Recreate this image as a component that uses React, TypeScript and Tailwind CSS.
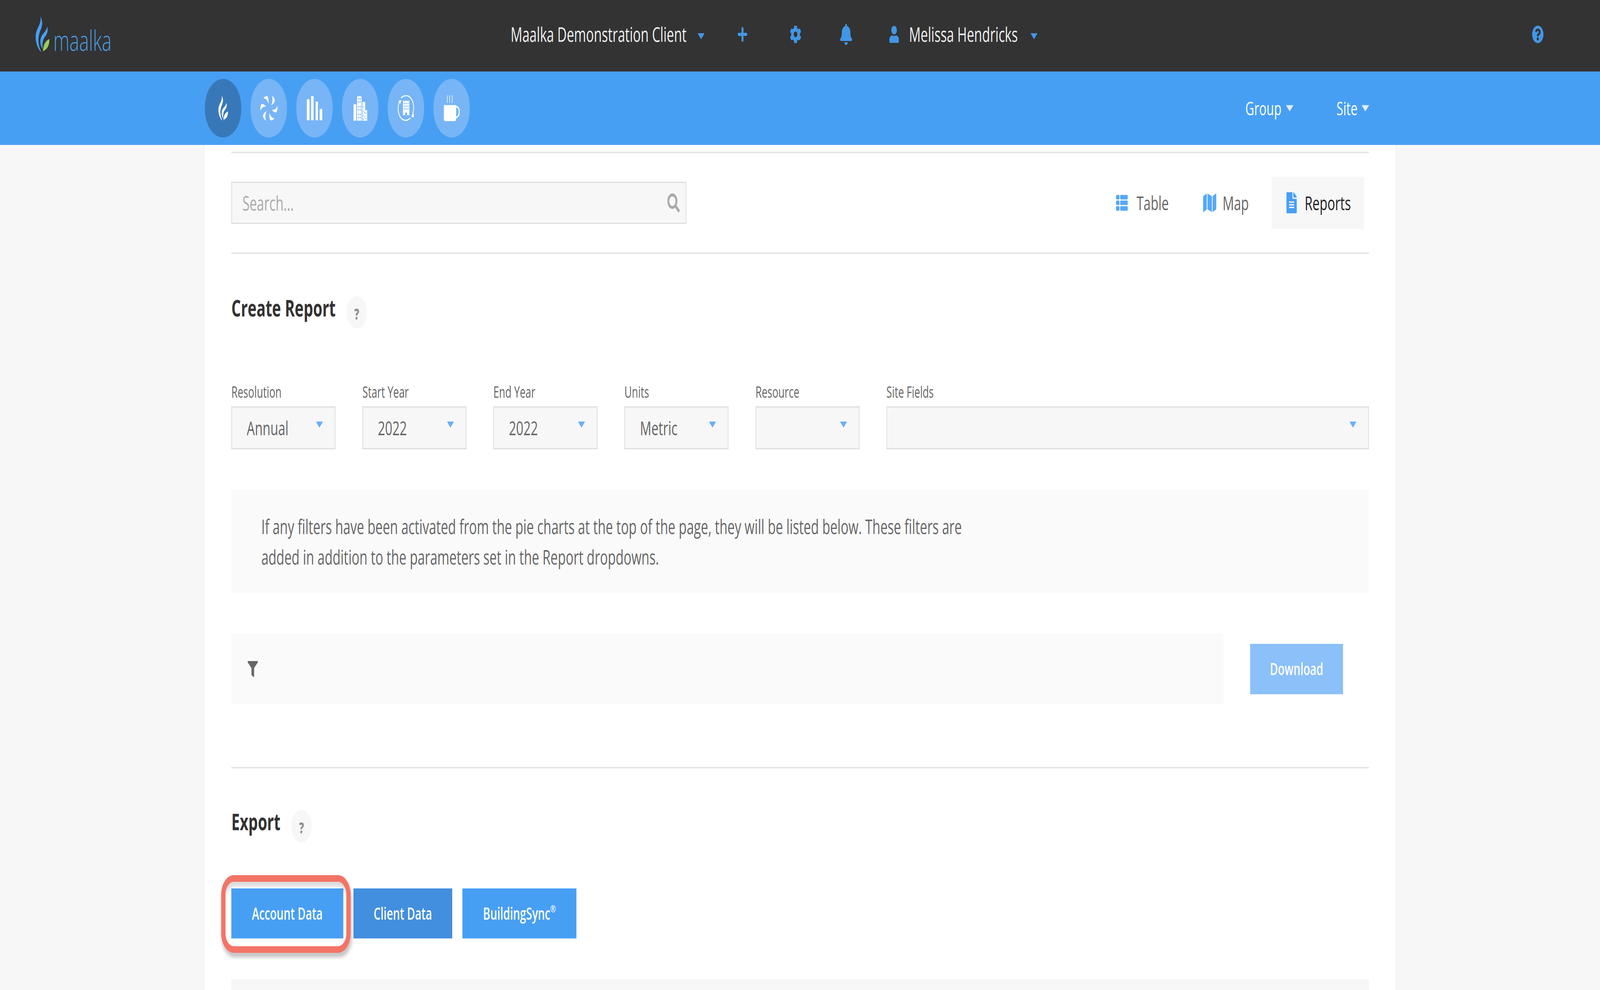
import type { ReactNode } from "react";
import { FaBell, FaCog, FaFileAlt, FaFilter, FaMap, FaPlus, FaQuestionCircle, FaSearch, FaThList, FaUser } from "react-icons/fa";

function Caret({ className }: { className: string }) {
  return (
    <svg viewBox="0 0 26 15" className={className}>
      <path d="M1 0h24c1 0 1 1 .5 1.6L14 14.4c-.6.8-1.4.8-2 0L.5 1.6C0 1 0 0 1 0z" fill="currentColor" />
    </svg>
  );
}

function Flame({ main, leaf, className }: { main: string; leaf: string; className: string }) {
  return (
    <svg viewBox="0 0 38 64" className={className}>
      <path fill={main} d="M14 0C19 8 19 14 16 20C13 26 9 30 8 40C7 50 12 58 16 64C8 60 0 48 0 36C0 25 10 18 13 9C14 6 14 3 14 0Z" />
      <path fill={main} d="M32 18C35 26 31 32 26 36C20 41 18 48 19 58C13 52 11 44 15 37C19 30 28 28 32 18Z" />
      <path fill={leaf} d="M38 40C38 50 34 58 20 62C21 52 25 44 38 40Z" />
    </svg>
  );
}

function FanIcon() {
  return (
    <svg viewBox="-35 -33 70 66" className="w-[70px] h-[66px]">
      {[0, 60, 120, 180, 240, 300].map((deg) => (
        <path key={deg} transform={`rotate(${deg})`} fill="#fff" d="M-22 -26C-15 -31 -8 -32 -5 -30C-1 -24 -1 -17 -2 -11C-5 -20 -12 -25 -22 -26Z" />
      ))}
    </svg>
  );
}

function BarsIcon() {
  return (
    <svg viewBox="0 0 61 62" className="w-[61px] h-[62px]" fill="#fff">
      <rect x="0" y="8" width="11" height="54" />
      <rect x="17" y="0" width="10" height="62" />
      <rect x="35" y="14" width="9" height="48" />
      <rect x="51" y="33" width="10" height="29" />
    </svg>
  );
}

function CityIcon() {
  const rows = [6, 14, 26, 34, 46, 54];
  return (
    <svg viewBox="0 0 54 64" className="w-[54px] h-[64px]">
      <path fill="#fff" d="M0 23l6-2 5 2v41H0z" />
      <path fill="#fff" d="M14 3l5-2h8l5 2v61H14z" />
      <path fill="#fff" d="M35 16h11v21h8v27H35z" />
      {rows.map((y) => (
        <g key={y} fill="#78b5f6">
          <rect x="18" y={y} width="3.5" height="4" />
          <rect x="25" y={y} width="3.5" height="4" />
        </g>
      ))}
      <g fill="#78b5f6">
        <rect x="38" y="27" width="3" height="3" />
        <rect x="38" y="38" width="3" height="3" />
        <rect x="42" y="42" width="3" height="3" />
        <rect x="48" y="43" width="3" height="3" />
        <rect x="38" y="49" width="3" height="3" />
        <rect x="44" y="52" width="3" height="3" />
        <rect x="38" y="58" width="3" height="3" />
        <rect x="48" y="57" width="3" height="3" />
      </g>
    </svg>
  );
}

function RecycleBuildingIcon() {
  return (
    <svg viewBox="0 0 66 66" className="w-[66px] h-[66px]">
      <path fill="none" stroke="#fff" strokeWidth="3" d="M13 7C27 -3 46 -1 56 12C65 23 65 36 59 47" />
      <path fill="none" stroke="#fff" strokeWidth="3" d="M50 58C37 67 19 66 9 54C0 43 -0 28 7 17" />
      <path fill="#fff" d="M53 56l9-13 2 13z" />
      <path fill="#fff" d="M3 14l11-2-3 10z" />
      <path fill="#fff" d="M21 14h25v37H37v-7h-7v7h-9z" />
      <g fill="#78b5f6">
        {[19, 26, 33].map((y) => (
          <g key={y}>
            <rect x="25" y={y} width="3.5" height="3.5" />
            <rect x="32" y={y} width="3.5" height="3.5" />
            <rect x="39" y={y} width="3.5" height="3.5" />
          </g>
        ))}
      </g>
    </svg>
  );
}

function CupIcon() {
  return (
    <svg viewBox="0 0 64 66" className="w-[64px] h-[66px]">
      <g fill="none" stroke="#fff" strokeOpacity="0.85" strokeWidth="2.4">
        <path d="M17 0C11 6 18 11 13 19" />
        <path d="M26 0C20 6 27 11 23 19" />
        <path d="M36 0C30 6 37 11 33 19" />
      </g>
      <path fill="#fff" d="M1 25h48v36c0 3-2 5-5 5H7c-3 0-6-2-6-5z" />
      <path fill="none" stroke="#fff" strokeWidth="4" d="M48 29c8-1 14 5 14 13s-6 14-14 15" />
    </svg>
  );
}

const navIcons = [
  { icon: <Flame main="#fff" leaf="#fff" className="w-[38px] h-[64px]" />, active: true },
  { icon: <FanIcon />, active: false },
  { icon: <BarsIcon />, active: false },
  { icon: <CityIcon />, active: false },
  { icon: <RecycleBuildingIcon />, active: false },
  { icon: <CupIcon />, active: false },
];

function HelpDot() {
  return (
    <div className="w-[80px] h-[83px] rounded-full bg-[#f7f7f7] flex items-center justify-center text-[38px] font-extrabold text-[#909090] leading-none pt-[6px]">
      ?
    </div>
  );
}

function Select({ label, value, width }: { label: string; value?: string; width: string }) {
  return (
    <div className={width}>
      <div className="text-[40px] leading-[50px] text-[#666] mb-[12px]">{label}</div>
      <div className="h-[110px] bg-[#f7f7f7] border-[3px] border-[#dedede] flex items-center justify-between pl-[58px] pr-[47px] text-[50px] text-[#666]">
        <span>{value}</span>
        <Caret className="w-[26px] h-[15px] text-[#67aff9] mb-[18px] ml-auto" />
      </div>
    </div>
  );
}

function ActionButton({ children, className }: { children: ReactNode; className: string }) {
  return (
    <button className={`h-[128px] text-white text-[43px] font-semibold flex items-center justify-center ${className}`}>
      {children}
    </button>
  );
}

export default function App() {
  return (
    <div className="w-screen h-screen overflow-hidden bg-[#f7f7f7]">
      <div className="w-[6301px] h-[2534px] origin-top-left scale-x-[0.65006] bg-[#f7f7f7] font-['Open_Sans',sans-serif] flex flex-col">
        {/* Top bar */}
        <div className="h-[183px] bg-[#333333] flex items-center text-[51px] text-[#f0f0f0] pl-[140px] pr-[222px] pb-[8px] shrink-0">
          <div className="flex items-center gap-[15px]">
            <Flame main="#479ff4" leaf="#9ccb5c" className="w-[55px] h-[92px]" />
            <span className="text-[72px] font-light text-[#4a9ee8] leading-none mt-[28px]">maalka</span>
          </div>
          <span className="ml-[1572px]">Maalka Demonstration Client</span>
          <Caret className="w-[26px] h-[15px] text-[#4296e6] ml-[44px] mt-[10px]" />
          <FaPlus className="w-[42px] h-[42px] text-[#4296e6] ml-[129px]" />
          <FaCog className="w-[46px] h-[46px] text-[#4296e6] ml-[165px]" />
          <FaBell className="w-[50px] h-[54px] text-[#4296e6] ml-[151px]" />
          <FaUser className="w-[38px] h-[44px] text-[#4296e6] ml-[145px]" />
          <span className="ml-[40px]">Melissa Hendricks</span>
          <Caret className="w-[26px] h-[15px] text-[#4296e6] ml-[51px] mt-[10px]" />
          <FaQuestionCircle className="w-[46px] h-[46px] text-[#4296e6] ml-auto" />
        </div>

        {/* Blue bar */}
        <div className="h-[188px] bg-[#479ff4] flex items-center pl-[807px] pr-[909px] shrink-0">
          <div className="flex gap-[37px]">
            {navIcons.map((item, i) => (
              <div
                key={i}
                className={`w-[143px] h-[150px] rounded-full flex items-center justify-center ${item.active ? "bg-[#3878b9]" : "bg-[#78b5f6]"}`}
              >
                {item.icon}
              </div>
            ))}
          </div>
          <div className="ml-auto flex items-center text-[48px] text-white">
            <span>Group</span>
            <Caret className="w-[30px] h-[16px] text-[#dcecfd] ml-[17px]" />
            <span className="ml-[170px]">Site</span>
            <Caret className="w-[30px] h-[16px] text-[#dcecfd] ml-[16px]" />
          </div>
        </div>

        {/* Content */}
        <div className="ml-[807px] w-[4687px] grow bg-white pl-[104px] pr-[103px] pt-[17px] flex flex-col">
          <div className="h-[4px] bg-[#e6e6e6] shrink-0" />
          <div className="h-[254px] flex items-center shrink-0">
            <div className="w-[1792px] h-[108px] bg-[#f7f7f7] border-[3px] border-[#dedede] flex items-center justify-between pl-[41px] pr-[23px]">
              <span className="text-[51px] text-[#aaaaaa]">Search...</span>
              <FaSearch className="w-[49px] h-[49px] text-[#aaaaaa]" />
            </div>
            <div className="ml-auto mr-[19px] flex items-center text-[50px] text-[#666]">
              <FaThList className="w-[52px] h-[46px] text-[#56a8f8]" />
              <span className="ml-[32px]">Table</span>
              <FaMap preserveAspectRatio="none" className="w-[52px] h-[54px] text-[#56a8f8] ml-[135px]" />
              <span className="ml-[25px]">Map</span>
              <div className="ml-[89px] w-[365px] h-[133px] bg-[#f7f7f7] flex items-center pl-[58px] text-[#222]">
                <FaFileAlt className="w-[43px] h-[54px] text-[#479ff4]" />
                <span className="ml-[30px]">Reports</span>
              </div>
            </div>
          </div>
          <div className="h-[4px] bg-[#e6e6e6] shrink-0" />

          <div className="mt-[108px] flex items-center gap-[43px] shrink-0">
            <h2 className="text-[59px] leading-[59px] mb-[24px] font-bold text-[#333]">Create Report</h2>
            <HelpDot />
          </div>

          <div className="mt-[137px] flex justify-between shrink-0">
            <Select label="Resolution" value="Annual" width="w-[410px]" />
            <Select label="Start Year" value="2022" width="w-[410px]" />
            <Select label="End Year" value="2022" width="w-[410px]" />
            <Select label="Units" value="Metric" width="w-[410px]" />
            <Select label="Resource" width="w-[410px]" />
            <Select label="Site Fields" width="w-[1900px]" />
          </div>

          <div className="mt-[104px] h-[263px] bg-[#fafafa] flex items-center pl-[118px] shrink-0">
            <p className="w-[3200px] text-[51px] leading-[78px] text-[#666]">
              If any filters have been activated from the pie charts at the top of the page, they will be listed below. These filters are
              <br />
              added in addition to the parameters set in the Report dropdowns.
            </p>
          </div>

          <div className="mt-[104px] flex items-center shrink-0">
            <div className="w-[3907px] h-[182px] bg-[#fafafa] flex items-center pl-[64px]">
              <FaFilter className="w-[41px] h-[41px] text-[#666]" />
            </div>
            <button className="ml-[105px] w-[366px] h-[129px] bg-[#8bc0f8] text-white text-[43px] font-semibold">Download</button>
          </div>

          <div className="mt-[160px] h-[4px] bg-[#e6e6e6] shrink-0" />

          <div className="mt-[106px] flex items-center gap-[43px] shrink-0">
            <h2 className="text-[59px] leading-[59px] mb-[24px] font-bold text-[#333]">Export</h2>
            <HelpDot />
          </div>

          <div className="mt-[118px] flex gap-[40px] shrink-0">
            <div className="relative">
              <ActionButton className="w-[441px] bg-[#479ff4]">Account Data</ActionButton>
              <div className="absolute -left-[40px] -top-[34px] -right-[29px] -bottom-[37px] rounded-[50px] border-[17px] border-[#f37466] shadow-[4px_12px_10px_rgba(0,0,0,0.22),inset_0_12px_10px_rgba(0,0,0,0.14)]" />
            </div>
            <ActionButton className="w-[389px] bg-[#428fdf]">Client Data</ActionButton>
            <ActionButton className="w-[449px] bg-[#479ff4]">
              BuildingSync<sup className="text-[26px]">®</sup>
            </ActionButton>
          </div>

          <div className="mt-[105px] grow bg-[#f7f7f7]" />
        </div>
      </div>
    </div>
  );
}
